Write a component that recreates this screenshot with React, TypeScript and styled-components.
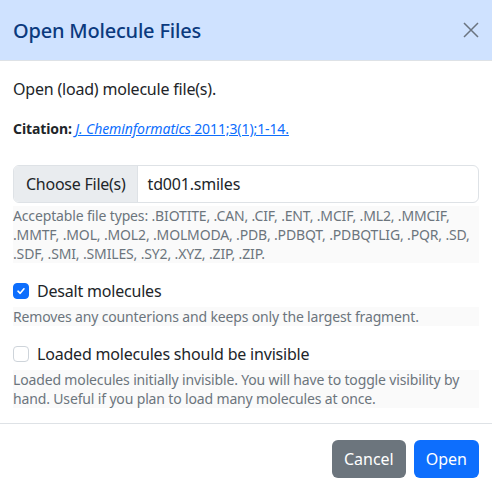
import React from "react";
import styled, { createGlobalStyle } from "styled-components";

const Global = createGlobalStyle`
  html, body { margin: 0; padding: 0; background: #fff; }
  body { font-family: "Noto Sans", "Open Sans", sans-serif; color: #212529; }
  * { box-sizing: border-box; }
`;

const Modal = styled.div`
  width: 492px;
  height: 494px;
  display: flex;
  flex-direction: column;
  background: #fff;
`;

const Header = styled.div`
  height: 61px;
  background: #cfe2ff;
  border-bottom: 1px solid #dee2e6;
  display: flex;
  align-items: center;
  justify-content: space-between;
  padding: 0 13px;
`;

const Title = styled.h5`
  margin: 0;
  font-size: 20px;
  font-weight: 500;
  letter-spacing: -0.2px;
  color: #0b3a7e;
`;

const Close = styled.button`
  border: 0;
  background: transparent;
  padding: 0;
  width: 16px;
  height: 16px;
  display: flex;
  align-items: center;
  justify-content: center;
  color: #6b7480;
`;

const Body = styled.div`
  flex: 1;
  padding: 16px 13px 0;
  display: flex;
  flex-direction: column;
`;

const Lead = styled.p`
  margin: 0 0 17px;
  font-size: 16px;
  line-height: 24px;
  letter-spacing: -0.2px;
`;

const Citation = styled.p`
  margin: 0 0 26px;
  font-size: 14px;
  line-height: 21px;
  letter-spacing: -0.1px;
`;

const Link = styled.a`
  color: #0d6efd;
  text-decoration: underline;
`;

const InputGroup = styled.div`
  display: flex;
  height: 38px;
  border: 1px solid #dee2e6;
  border-radius: 6px;
  overflow: hidden;
`;

const FileButton = styled.div`
  background: #e9ecef;
  border-right: 1px solid #dee2e6;
  padding: 0 11px 0 12px;
  display: flex;
  align-items: center;
  font-size: 16px;
  letter-spacing: -0.25px;
`;

const FileName = styled.div`
  flex: 1;
  padding: 0 10px;
  display: flex;
  align-items: center;
  font-size: 16px;
  letter-spacing: -0.2px;
`;

const Help = styled.div`
  margin-top: 3px;
  background: #fafafa;
  font-size: 14px;
  line-height: 19px;
  letter-spacing: -0.15px;
  color: #6c757d;
`;

const Check = styled.label<{ $mt: number }>`
  display: flex;
  align-items: center;
  gap: 8px;
  margin-top: ${(p) => p.$mt}px;
  margin-bottom: 1px;
  font-size: 16px;
  line-height: 24px;
  letter-spacing: -0.2px;
`;

const Box = styled.span<{ $checked?: boolean }>`
  width: 16px;
  height: 16px;
  border-radius: 4px;
  border: 1px solid ${(p) => (p.$checked ? "#0d6efd" : "#ced4da")};
  background: ${(p) => (p.$checked ? "#0d6efd" : "#fff")};
  display: flex;
  align-items: center;
  justify-content: center;
`;

const Footer = styled.div`
  border-top: 1px solid #dee2e6;
  padding: 16px 13px;
  display: flex;
  justify-content: flex-end;
  gap: 8px;
`;

const Button = styled.button<{ $variant: "secondary" | "primary" }>`
  height: 38px;
  padding: 0 12px;
  border: 0;
  border-radius: 6px;
  font-family: inherit;
  font-size: 16px;
  color: #fff;
  background: ${(p) => (p.$variant === "primary" ? "#0d6efd" : "#6c757d")};
`;

export default function App() {
  return (
    <>
      <Global />
      <Modal>
        <Header>
          <Title>Open Molecule Files</Title>
          <Close aria-label="Close">
            <svg width="16" height="16" viewBox="0 0 16 16">
              <path d="M1 1L15 15M15 1L1 15" stroke="currentColor" strokeWidth="1.5" />
            </svg>
          </Close>
        </Header>
        <Body>
          <Lead>Open (load) molecule file(s).</Lead>
          <Citation>
            <b>Citation:</b>{" "}
            <Link href="#">
              <i>J. Cheminformatics</i> 2011;3(1);1-14.
            </Link>
          </Citation>
          <InputGroup>
            <FileButton>Choose File(s)</FileButton>
            <FileName>td001.smiles</FileName>
          </InputGroup>
          <Help>
            Acceptable file types: .BIOTITE, .CAN, .CIF, .ENT, .MCIF, .ML2, .MMCIF, .MMTF, .MOL, .MOL2,
            .MOLMODA, .PDB, .PDBQT, .PDBQTLIG, .PQR, .SD, .SDF, .SMI, .SMILES, .SY2, .XYZ, .ZIP, .ZIP.
          </Help>
          <Check $mt={16}>
            <Box $checked>
              <svg width="10" height="10" viewBox="0 0 10 10">
                <path d="M2 5.2L4.2 7.3L8 2.8" fill="none" stroke="#fff" strokeWidth="1.6" strokeLinecap="round" strokeLinejoin="round" />
              </svg>
            </Box>
            Desalt molecules
          </Check>
          <Help>Removes any counterions and keeps only the largest fragment.</Help>
          <Check $mt={16}>
            <Box />
            Loaded molecules should be invisible
          </Check>
          <Help>
            Loaded molecules initially invisible. You will have to toggle visibility by hand. Useful if you
            plan to load many molecules at once.
          </Help>
        </Body>
        <Footer>
          <Button $variant="secondary">Cancel</Button>
          <Button $variant="primary">Open</Button>
        </Footer>
      </Modal>
    </>
  );
}
